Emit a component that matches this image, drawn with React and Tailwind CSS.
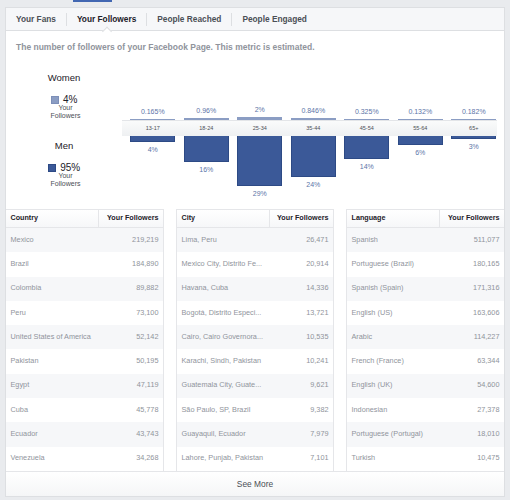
import React from "react";

const ages = [
  { a: "13-17", w: "0.165%", wh: 1, m: "4%", mh: 6 },
  { a: "18-24", w: "0.96%", wh: 2, m: "16%", mh: 26 },
  { a: "25-34", w: "2%", wh: 3, m: "29%", mh: 50 },
  { a: "35-44", w: "0.846%", wh: 2, m: "24%", mh: 41 },
  { a: "45-54", w: "0.325%", wh: 1, m: "14%", mh: 23 },
  { a: "55-64", w: "0.132%", wh: 1, m: "6%", mh: 9 },
  { a: "65+", w: "0.182%", wh: 1, m: "3%", mh: 3 },
];

const tables = [
  {
    head: "Country",
    rows: [
      ["Mexico", "219,219"],
      ["Brazil", "184,890"],
      ["Colombia", "89,882"],
      ["Peru", "73,100"],
      ["United States of America", "52,142"],
      ["Pakistan", "50,195"],
      ["Egypt", "47,119"],
      ["Cuba", "45,778"],
      ["Ecuador", "43,743"],
      ["Venezuela", "34,268"],
    ],
    cls: "border-r",
  },
  {
    head: "City",
    rows: [
      ["Lima, Peru", "26,471"],
      ["Mexico City, Distrito Fe...", "20,914"],
      ["Havana, Cuba", "14,336"],
      ["Bogotá, Distrito Especi...", "13,721"],
      ["Cairo, Cairo Governora...", "10,535"],
      ["Karachi, Sindh, Pakistan", "10,241"],
      ["Guatemala City, Guate...", "9,621"],
      ["São Paulo, SP, Brazil", "9,382"],
      ["Guayaquil, Ecuador", "7,979"],
      ["Lahore, Punjab, Pakistan", "7,101"],
    ],
    cls: "border-x",
  },
  {
    head: "Language",
    rows: [
      ["Spanish", "511,077"],
      ["Portuguese (Brazil)", "180,165"],
      ["Spanish (Spain)", "171,316"],
      ["English (US)", "163,606"],
      ["Arabic", "114,227"],
      ["French (France)", "63,344"],
      ["English (UK)", "54,600"],
      ["Indonesian", "27,378"],
      ["Portuguese (Portugal)", "18,010"],
      ["Turkish", "10,475"],
    ],
    cls: "border-l",
  },
];

function Tab({ label, active }) {
  return (
    <div
      className={`relative h-full flex items-center px-[10px] text-[8.3px] font-bold ${
        active ? "text-[#1d2129]" : "text-[#4b4f56]"
      }`}
    >
      {label}
      {active && (
        <div className="absolute left-1/2 -translate-x-1/2 bottom-[-4.5px] w-[7px] h-[7px] rotate-45 bg-white border-l border-t border-[#dddfe2]" />
      )}
    </div>
  );
}

function Sep() {
  return <div className="w-px h-[13px] bg-[#dddfe2]" />;
}

function Legend({ title, pct, swatch }) {
  return (
    <div className="flex flex-col items-center">
      <div className="text-[9.5px] leading-[11px] text-[#1d2129]">{title}</div>
      <div className="mt-[13.5px] flex items-center gap-[4.5px]">
        <div className={`w-[8px] h-[8px] ${swatch}`} />
        <div className="text-[10px] leading-[8px] text-[#1d2129]">{pct}</div>
      </div>
      <div className="text-[7px] leading-[8px] text-[#4b4f56] text-center pl-[3px]">
        Your
        <br />
        Followers
      </div>
    </div>
  );
}

export default function App() {
  return (
    <div className="w-[510px] h-[500px] overflow-hidden bg-[#e9ebee] font-['Liberation_Sans',Arial,sans-serif]">
      <div className="h-[7px]">
        <div className="ml-[73px] w-[39px] h-[1.5px] bg-[#4267b2]" />
      </div>
      <div className="mx-[5px] h-[490px] border border-[#dddfe2] bg-white flex flex-col">
        {/* tabs */}
        <div className="h-[23px] shrink-0 bg-[#f6f7f9] border-b border-[#dddfe2] flex items-center">
          <Tab label="Your Fans" />
          <Sep />
          <Tab label="Your Followers" active />
          <Sep />
          <Tab label="People Reached" />
          <Sep />
          <Tab label="People Engaged" />
        </div>

        {/* description */}
        <div className="h-[21px] shrink-0 pt-[11px] pl-[10px] text-[8.5px] leading-[10px] font-bold text-[#90949c] whitespace-nowrap">
          The number of followers of your Facebook Page. This metric is estimated.
        </div>

        {/* chart */}
        <div className="h-[157px] shrink-0 flex">
          <div className="w-[116px] flex flex-col items-center pt-[19.5px]">
            <Legend title="Women" pct="4%" swatch="bg-[#8b9dc3] border border-[#7d8fb8]" />
            <div className="mt-[19.5px]">
              <Legend title="Men" pct="95%" swatch="bg-[#3b5998] border border-[#2d4a85]" />
            </div>
          </div>
          <div className="w-[375px] pt-[43px] flex flex-col">
            <div className="h-[25px] flex pl-[4px]">
              {ages.map((g) => (
                <div key={g.a} className="w-[53.5px] shrink-0 flex flex-col items-center justify-end">
                  <div className="text-[7px] leading-[8px] text-[#5d75a8] mb-[3.5px]">{g.w}</div>
                  <div className="w-[45px] bg-[#8b9dc3]" style={{ height: g.wh }} />
                </div>
              ))}
            </div>
            <div className="h-[16px] flex pl-[4px] bg-gradient-to-b from-[#fafbfb] to-[#eef0f2] border-t border-[#e3e5e8]">
              {ages.map((g) => (
                <div
                  key={g.a}
                  className="w-[53.5px] shrink-0 flex items-center justify-center text-[5.5px] text-[#4b4f56]"
                >
                  {g.a}
                </div>
              ))}
            </div>
            <div className="flex pl-[4px]">
              {ages.map((g) => (
                <div key={g.a} className="w-[53.5px] shrink-0 flex flex-col items-center">
                  <div
                    className="w-[45px] bg-[#3b5998] border border-t-0 border-[#2d4a85]"
                    style={{ height: g.mh }}
                  />
                  <div className="mt-[3.5px] text-[7px] leading-[8px] text-[#5d75a8]">{g.m}</div>
                </div>
              ))}
            </div>
          </div>
        </div>

        {/* tables */}
        <div className="flex gap-[12px] h-[262px] shrink-0">
          {tables.map((t) => (
            <div key={t.head} className={`w-[158px] flex flex-col border-[#e5e6e9] ${t.cls}`}>
              <div className="h-[19px] flex border-y border-[#e5e6e9] bg-gradient-to-b from-white to-[#f6f7f9] text-[7.2px] font-bold text-[#1d2129]">
                <div className="w-[93px] flex items-center pl-[4.5px] border-r border-[#e5e6e9]">
                  {t.head}
                </div>
                <div className="flex-1 flex items-center justify-end pr-[4.5px]">Your Followers</div>
              </div>
              {t.rows.map((r, i) => (
                <div
                  key={r[0]}
                  className={`h-[24.3px] flex items-center justify-between px-[4.5px] text-[7.3px] text-[#90949c] ${
                    i % 2 === 0 ? "bg-[#f6f7f9]" : "bg-white"
                  }`}
                >
                  <span className="whitespace-nowrap">{r[0]}</span>
                  <span>{r[1]}</span>
                </div>
              ))}
            </div>
          ))}
        </div>

        {/* see more */}
        <div className="h-[25px] shrink-0 border-t border-[#e5e6e9] bg-gradient-to-b from-white to-[#f5f6f7] flex items-center justify-center text-[8.4px] text-[#4b4f56]">
          See More
        </div>
      </div>
    </div>
  );
}
